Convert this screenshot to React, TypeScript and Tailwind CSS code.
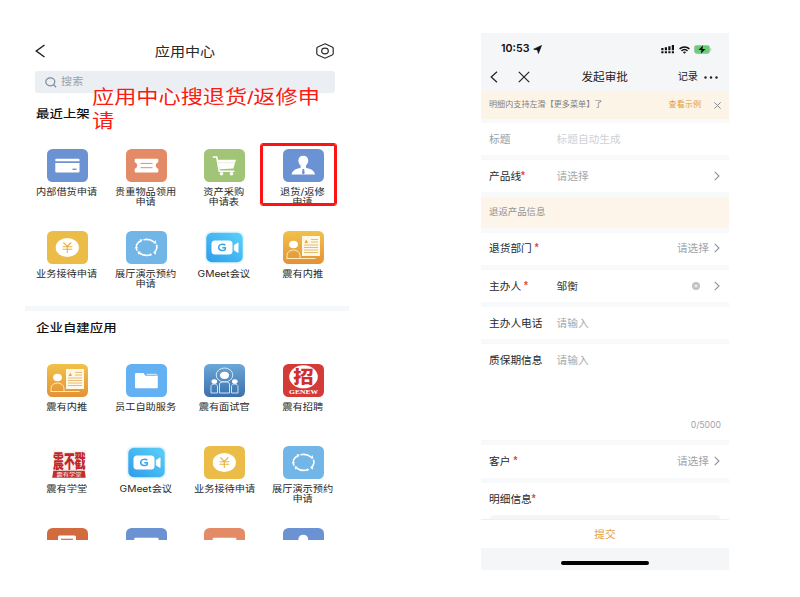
import type { ReactNode } from "react";

const sans = "font-['Liberation_Sans','Noto_Sans_CJK_SC',sans-serif]";

function Tile({ from, to, children }: { from: string; to?: string; children: ReactNode }) {
  const id = "g" + from.slice(1) + (to ?? "").slice(1);
  return (
    <svg width="41" height="33" viewBox="0 0 41 33" className="block">
      <defs>
        <linearGradient id={id} x1="0" y1="0" x2="0" y2="1">
          <stop offset="0" stopColor={from} />
          <stop offset="1" stopColor={to ?? from} />
        </linearGradient>
      </defs>
      <rect width="41" height="33" rx="5.5" fill={`url(#${id})`} />
      {children}
    </svg>
  );
}

const Card = () => (
  <Tile from="#6b93d3">
    <path d="M9 9.8h22.5a1 1 0 0 1 1 1v1.4H8.3v-1.4a1 1 0 0 1 .7-1zM8.3 14h24.2v8.6a1 1 0 0 1-1 1H9.3a1 1 0 0 1-1-1z" fill="#fff" />
    <path d="M25.5 20.3h4" stroke="#6b93d3" strokeWidth="1.4" />
  </Tile>
);

const Ticket = () => (
  <Tile from="#e38b66">
    <path d="M9.7 9.8h21.6a1 1 0 0 1 1 1v2.4c-1.6.6-2.5 1.8-2.5 3.3s.9 2.7 2.5 3.3v2.6a1 1 0 0 1-1 1H9.7a1 1 0 0 1-1-1v-2.6c1.6-.6 2.5-1.8 2.5-3.3s-.9-2.7-2.5-3.3v-2.4a1 1 0 0 1 1-1z" fill="#fff" />
    <path d="M14.5 14.4h12M14.5 18.7h12" stroke="#e38b66" strokeWidth="1" />
  </Tile>
);

const Cart = () => (
  <Tile from="#a1c477">
    <path d="M9.3 8h3.4l2.6 14.3h14.5" fill="none" stroke="#fff" strokeWidth="1.6" strokeLinecap="round" />
    <path d="M13.8 10.8H32l-2.6 8.6-13.8.9z" fill="#fff" />
    <path d="M14.5 13.7h16.5" stroke="#d4e5c0" strokeWidth=".6" />
    <circle cx="17.5" cy="24.7" r="1.8" fill="#fff" />
    <circle cx="27.5" cy="24.7" r="1.8" fill="#fff" />
  </Tile>
);

const Person = () => (
  <Tile from="#6b93d3">
    <path d="M20.3 6.8c3 0 4.900 1.800 4.900 4.700 0 2.200-.8 3.800-2.200 5v2.200c3.200 1.200 8.200 1.500 9 6.800H8.600c.8-5.300 5.800-5.600 9-6.800v-2.200c-1.400-1.200-2.200-2.800-2.200-5 0-2.900 1.900-4.700 4.900-4.700z" fill="#fff" />
    <path d="M19.600 20h1.500l.6 4.200-1.300 1.300-1.400-1.300z" fill="#6b93d3" />
  </Tile>
);

const Yen = () => (
  <Tile from="#ebbd48">
    <ellipse cx="20.300" cy="16.500" rx="11.600" ry="9.500" fill="#fff" />
    <path d="M16.500 11.500l3.800 4 3.900-4M15.500 15.700h9.800M15.500 18.300h9.800M20.300 15.500v6.500" fill="none" stroke="#e6b33c" strokeWidth="1.100" />
  </Tile>
);

const Cycle = () => (
  <Tile from="#72b6e8">
    <g fill="none" stroke="#fff" strokeWidth="1.600">
      <path d="M10.300 15.200c.5-2.500 2.200-4.400 4.800-5.500M17.500 8.700c4.200-.8 7.800.1 10.300 2.200M30.500 13.800c1 3 .2 5.600-2.200 7.600M24.800 23.700c-4.200 1.300-8.500.5-11.500-1.900M11.200 19.700c-.6-1-.9-1.900-.9-2.900" />
    </g>
    <path d="M13.500 8.300l3.200.1-1.400 2.700zM27.200 12.300l2.300-3.300.8 3.700zM30.300 21l-.8 2.700-2.500-2.400zM14.700 20.700l-2.500 3-.6-3.500zM8.700 17.300l1.700-2.800 1.500 2.600zM23.800 22.200l2.300 1.100-1.400 2z" fill="#fff" />
  </Tile>
);

const Meet = () => (
  <svg width="41" height="33" viewBox="0 0 41 33" className="block">
    <defs>
      <linearGradient id="meet" x1="0" y1="1" x2="1" y2="0">
        <stop offset="0" stopColor="#2f9dec" />
        <stop offset="1" stopColor="#5bd0f8" />
      </linearGradient>
    </defs>
    <rect x=".8" y=".3" width="39.400" height="32.500" rx="6" fill="#e3f5fd" />
    <rect x="2.300" y="1.800" width="36.400" height="29.400" rx="5.500" fill="url(#meet)" />
    <rect x="7.500" y="9.500" width="21" height="14" rx="3.500" fill="#fff" />
    <path d="M30.300 14.200l3.800-2.300v9.600l-3.800-2.300z" fill="#fff" stroke="#fff" strokeWidth=".8" strokeLinejoin="round" />
    <path d="M21.300 14.300c-1.600-1.700-6.600-1.500-6.600 2.200s5.600 3.700 6.600 1.800v-1.500h-3" fill="none" stroke="#36a5ee" strokeWidth="1.500" />
  </svg>
);

const Referral = () => (
  <Tile from="#f1c24a" to="#e39235">
    <rect x="19" y="5" width="18" height="20" fill="#fff8e8" />
    <path d="M28 8.500h7M28 11h7M21 14h14M21 16.500h14M21 19h14M21 21.500h14" stroke="#e3b566" strokeWidth=".9" />
    <path d="M21.500 12l1.800-3.500 1.700 3.500z" fill="#e7a936" />
    <ellipse cx="10.500" cy="13.500" rx="4.400" ry="3.800" fill="#fff" />
    <path d="M4 27.500v-3c0-7.300 13-7.300 13 0v3M3.500 27.500h29" fill="none" stroke="#fff1cf" strokeWidth=".9" />
  </Tile>
);

const Folder = () => (
  <Tile from="#63b1f3">
    <path d="M10 9h7.500l2 2.700h11.300a1 1 0 0 1 1 1v10.600a1 1 0 0 1-1 1H10a1 1 0 0 1-1-1V10a1 1 0 0 1 1-1z" fill="#fff" />
    <path d="M20.500 10.300h9.500l1.500 1" stroke="#fff" strokeWidth=".8" fill="none" />
  </Tile>
);

const Interview = () => (
  <Tile from="#6ba8d8" to="#3b70ae">
    <g fill="none" stroke="#dfeefa" strokeWidth=".9">
      <ellipse cx="20.500" cy="11" rx="8.300" ry="7" />
      <path d="M15.500 29V20c0-3 10-3 10 0v9zM7 29v-6.500c0-3.300 6.500-3.300 6.500 0V29zM27.500 29v-6.500c0-3.300 6.500-3.300 6.500 0V29z" />
    </g>
    <ellipse cx="20.500" cy="11.300" rx="4.500" ry="3.600" fill="#fff" />
    <ellipse cx="10.300" cy="17.500" rx="2.800" ry="2.300" fill="#fff" />
    <ellipse cx="30.800" cy="17.500" rx="2.800" ry="2.300" fill="#fff" />
  </Tile>
);

const Recruit = () => (
  <Tile from="#d43a36">
    <ellipse cx="20.500" cy="12.800" rx="14.300" ry="11.500" fill="#fff" />
    <text transform="translate(20.500 19) scale(1.200 1)" textAnchor="middle" fontSize="17" fontWeight="900" fill="#cf302d" className="font-['Noto_Sans_CJK_SC',sans-serif]">招</text>
    <text x="20.500" y="30.300" textAnchor="middle" fontSize="6.500" fontWeight="700" textLength="29" lengthAdjust="spacingAndGlyphs" fill="#fff" className="font-['Liberation_Serif',serif]">GENEW</text>
  </Tile>
);

const School = () => (
  <svg width="41" height="33" viewBox="0 0 41 33" className="block overflow-visible">
    <path d="M6 4l14 2 19-2-1.500 8 1.500 20H5L7.500 16z" fill="#fbeceb" />
    <path d="M6.300 24.800h31.400l1 7H5.200z" fill="#bf2f2e" />
    <text transform="translate(22.300 21.500) scale(.800 1.350)" textAnchor="middle" fontSize="13.500" fontWeight="900" fill="#c02626" className="font-['Noto_Sans_CJK_SC',sans-serif]">震不戳</text>
    <text transform="translate(22 30.300) scale(1.250 1)" textAnchor="middle" fontSize="5" fill="#fff" className="font-['Noto_Sans_CJK_SC',sans-serif]">震有学堂</text>
  </svg>
);

const Doc = () => (
  <Tile from="#d26c40">
    <rect x="11" y="7.500" width="18" height="20" rx="1.500" fill="#fff" />
    <path d="M14 11.300h12" stroke="#d26c40" strokeWidth="1.200" />
  </Tile>
);

type App = { icon: () => ReactNode; lines: string[]; marked?: boolean };

const recent: App[] = [
  { icon: Card, lines: ["内部借货申请"] },
  { icon: Ticket, lines: ["贵重物品领用", "申请"] },
  { icon: Cart, lines: ["资产采购", "申请表"] },
  { icon: Person, lines: ["退货/返修", "申请"], marked: true },
  { icon: Yen, lines: ["业务接待申请"] },
  { icon: Cycle, lines: ["展厅演示预约", "申请"] },
  { icon: Meet, lines: ["GMeet会议"] },
  { icon: Referral, lines: ["震有内推"] },
];

const custom: App[] = [
  { icon: Referral, lines: ["震有内推"] },
  { icon: Folder, lines: ["员工自助服务"] },
  { icon: Interview, lines: ["震有面试官"] },
  { icon: Recruit, lines: ["震有招聘"] },
  { icon: School, lines: ["震有学堂"] },
  { icon: Meet, lines: ["GMeet会议"] },
  { icon: Yen, lines: ["业务接待申请"] },
  { icon: Cycle, lines: ["展厅演示预约", "申请"] },
  { icon: Doc, lines: [] },
  { icon: Card, lines: [] },
  { icon: Ticket, lines: [] },
  { icon: Person, lines: [] },
];

function AppGrid({ apps }: { apps: App[] }) {
  return (
    <div className="ml-[3.200px] grid w-[314.400px] auto-rows-[82px] grid-cols-4">
      {apps.map((a, i) => (
        <div key={i} className="relative flex flex-col items-center">
          <a.icon />
          <div className="mt-[5.400px] mr-[1px] flex scale-x-[1.150] flex-col items-center font-[Inter,'Noto_Sans_CJK_SC',sans-serif] text-[8.900px] leading-[10px] whitespace-nowrap text-[#262626]">
            {a.lines.map((l) => (
              <span key={l}>{l}</span>
            ))}
          </div>
          {a.marked && <div className="absolute -top-[5px] -left-[3px] h-[61px] w-[75px] rounded-[2px] border-[2.500px] border-[#fb1414] outline-[.5px] outline-[#fb1414]" />}
        </div>
      ))}
    </div>
  );
}

function AppCenter() {
  return (
    <section className="relative mt-[33px] ml-[25px] flex h-[507px] w-[324px] shrink-0 flex-col overflow-hidden bg-white">
      <header className="flex h-[36px] shrink-0 items-center justify-between pr-[15px] pl-[10px]">
        <svg width="11" height="14" viewBox="0 0 11 14" fill="none" stroke="#222" strokeWidth="1.500">
          <path d="M9.500 1L1.300 7l8.200 6" />
        </svg>
        <h1 className="ml-[8px] scale-x-[1.160] text-[13px] leading-none text-[#2a2a2a]">应用中心</h1>
        <svg width="18" height="16" viewBox="0 0 18 16" fill="none" stroke="#2a2a2a" strokeWidth="1.200">
          <path d="M9 .8l7.200 3.200q1 .5 1 1.400v5.200q0 .9-1 1.400L9 15.200 1.800 12q-1-.5-1-1.400V5.400q0-.9 1-1.400z" />
          <ellipse cx="9" cy="8" rx="3.300" ry="2.800" />
        </svg>
      </header>
      <div className="mt-[2px] ml-[10px] flex h-[22px] w-[300px] shrink-0 items-center gap-[4px] rounded-[3px] bg-[#ebeff3] pl-[10px] text-[#9aa1a8]">
        <svg width="12" height="11" viewBox="0 0 12 11" fill="none" stroke="#7c8c99" strokeWidth="1.200">
          <ellipse cx="5.300" cy="4.800" rx="4.500" ry="4" />
          <path d="M8.500 7.800l2.700 2.400" />
        </svg>
        <span className="origin-left scale-x-[1.150] text-[9.700px] leading-none">搜索</span>
      </div>
      <h2 className="mt-[13px] ml-[10.500px] h-[16px] w-fit origin-left scale-x-[1.170] text-[11.500px] leading-[16px] font-medium text-[#111]">最近上架</h2>
      <div className="mt-[27px] h-[157px] shrink-0">
        <AppGrid apps={recent} />
      </div>
      <div className="h-[5px] shrink-0 bg-[#f4f7fb]" />
      <h2 className="mt-[9px] ml-[10.500px] h-[16px] w-fit shrink-0 origin-left scale-x-[1.170] text-[11.500px] leading-[16px] font-medium text-[#111]">企业自建应用</h2>
      <div className="mt-[28px]">
        <AppGrid apps={custom} />
      </div>
      <p className="absolute top-[53px] left-[67px] origin-left scale-x-[1.167] text-[19px] leading-[24px] whitespace-nowrap text-[#fb1b12]">
        应用中心搜退货/返修申
        <br />请
      </p>
    </section>
  );
}

const Chevron = () => (
  <svg width="6" height="10" viewBox="0 0 6 10" fill="none" stroke="#8d9298" strokeWidth="1.100">
    <path d="M.7 .8L5 5 .7 9.200" />
  </svg>
);

type FieldProps = {
  label: string;
  required?: boolean;
  spaced?: boolean;
  value?: string;
  valueTone?: string;
  labelTone?: string;
  trailing?: ReactNode;
  height?: string;
};

function Field({ label, required, spaced, value, valueTone = "text-[#a5a9ae]", labelTone = "text-[#26282c]", trailing, height = "h-[32.300px]" }: FieldProps) {
  return (
    <div className={`flex shrink-0 bg-white pr-[9px] pl-[8px] text-[10.700px] ${height}`}>
      <div className="flex h-[32px] w-full items-center">
        <div className={`flex w-[67.500px] items-center whitespace-nowrap ${labelTone}`}>
          {label}
          {required && <span className={`text-[10px] leading-none font-bold text-[#e0483d] ${spaced ? "ml-[3px]" : ""}`}>*</span>}
        </div>
        <div className={valueTone}>{value}</div>
        <div className="ml-auto flex items-center text-[#9fa3a8]">{trailing}</div>
      </div>
    </div>
  );
}

const Pick = () => (
  <>
    <span className="mr-[5px]">请选择</span>
    <Chevron />
  </>
);

function ApprovalForm() {
  return (
    <section className="mt-[33px] ml-[132px] flex h-[537px] w-[248px] shrink-0 flex-col overflow-hidden bg-[#f8f9fb]">
      <div className="flex h-[58px] shrink-0 flex-col bg-[#f5f6f8]">
        <div className="flex h-[33px] items-center pr-[17px] pl-[20px]">
          <span className="font-[Inter,sans-serif] text-[10.700px] font-semibold text-[#111]">10:53</span>
          <svg className="ml-[3px]" width="9" height="9" viewBox="0 0 9 9">
            <path d="M8.500.5L5.400 8.400 4.500 4.900.7 4.200z" fill="#111" stroke="#111" strokeWidth=".7" strokeLinejoin="round" />
          </svg>
          <div className="ml-auto flex items-center gap-[4px]">
            <svg width="14" height="9" viewBox="0 0 14 9" fill="#111">
              <path d="M.3 3h2.200v2.300H.3zM3.800 2.300H6v3H3.800zM7.300 1.200h2.200v4.100H7.300zM10.800 0H13v5.300h-2.200zM.3 6.300h2.200v2H.3zM3.800 6.300H6v2H3.800zM7.300 6.300h2.200v2H7.300zM10.800 6.300H13v2h-2.200z" />
            </svg>
            <svg width="11" height="8" viewBox="0 0 11 8" fill="none" stroke="#111" strokeWidth="1.500">
              <path d="M.6 2.900c2.800-2.700 7-2.700 9.800 0M2.500 4.900c1.800-1.600 4.200-1.600 6 0" />
              <path d="M4 6.200L5.500 7.700 7 6.200c-.9-.8-2.100-.8-3 0z" fill="#111" stroke="none" />
            </svg>
            <svg width="18" height="9" viewBox="0 0 18 9">
              <rect x=".4" y=".4" width="15.200" height="8" rx="2.300" fill="#65cf72" stroke="#aab5ac" strokeWidth=".7" />
              <path d="M16.500 3v3c1-.3 1-2.700 0-3z" fill="#aaa" />
              <path d="M9 .3L4.500 5h3L6.800 8.700 11.500 4h-3z" fill="#111" />
            </svg>
          </div>
        </div>
        <div className="flex h-[22px] items-center pr-[11px] pl-[9px] text-[#222]">
          <svg width="8" height="12" viewBox="0 0 8 12" fill="none" stroke="#222" strokeWidth="1.200">
            <path d="M7 .7L1.200 6 7 11.300" />
          </svg>
          <svg className="ml-[20px]" width="12" height="12" viewBox="0 0 12 12" fill="none" stroke="#222" strokeWidth="1.200">
            <path d="M.8.8l10.400 10.400M11.200.8L.8 11.200" />
          </svg>
          <span className="ml-[51.500px] text-[11.600px] leading-none">发起审批</span>
          <span className="ml-auto text-[10.200px] leading-none">记录</span>
          <svg className="ml-[6px]" width="14" height="3" viewBox="0 0 14 3" fill="#222">
            <circle cx="1.500" cy="1.500" r="1.200" />
            <circle cx="7" cy="1.500" r="1.200" />
            <circle cx="12.500" cy="1.500" r="1.200" />
          </svg>
        </div>
      </div>
      <div className="flex h-[28px] shrink-0 items-center bg-[#fcf4e7] pr-[8px] pl-[8px] text-[8.100px]">
        <span className="text-[#7d8184]">明细内支持左滑【更多菜单】了</span>
        <span className="ml-auto text-[#e09b3c]">查看示例</span>
        <svg className="ml-[13px]" width="7" height="7" viewBox="0 0 7 7" stroke="#7c8084" strokeWidth=".9">
          <path d="M.3.300l6.400 6.400M6.700.3L.3 6.700" />
        </svg>
      </div>
      <div className="mt-[4px] flex shrink-0 flex-col gap-[5px]">
        <Field label="标题" value="标题自动生成" labelTone="text-[#9b9ea2]" valueTone="text-[#cfd1d4]" height="h-[32px]" />
        <Field label="产品线" required value="请选择" trailing={<Chevron />} height="h-[32px]" />
        <div className="flex h-[30.500px] items-center bg-[#fdf5e9] pl-[8px] text-[9.400px] text-[#8f9295]">退返产品信息</div>
        <Field label="退货部门" required spaced trailing={<Pick />} />
        <Field
          label="主办人"
          required
          spaced
          value="邹衡"
          valueTone="text-[#3a3c40]"
          height="h-[32px]"
          trailing={
            <>
              <svg className="mr-[14px]" width="8" height="8" viewBox="0 0 8 8">
                <circle cx="4" cy="4" r="4" fill="#bfc2c6" />
                <path d="M2.600 2.600l2.800 2.800M5.400 2.600L2.600 5.400" stroke="#fff" strokeWidth=".8" />
              </svg>
              <Chevron />
            </>
          }
        />
        <Field label="主办人电话" value="请输入" />
        <div className="relative">
          <Field label="质保期信息" value="请输入" height="h-[96.300px]" />
          <span className="absolute right-[8px] bottom-[8px] font-[Inter,sans-serif] text-[8.700px] leading-[13px] text-[#9fa3a8]">0/5000</span>
        </div>
        <Field label="客户" required spaced trailing={<Pick />} />
        <div className="h-[36px] overflow-hidden bg-white">
          <Field label="明细信息" required />
          <div className="mx-[8px] h-[10px] rounded-t-[5px] bg-[#f5f6f7]" />
        </div>
      </div>
      <div className="flex h-[29.500px] shrink-0 items-center justify-center border-t border-[#eff0f2] bg-white text-[10.700px] text-[#e5a047]">提交</div>
      <div className="flex flex-1 items-center justify-center bg-[#f5f6f8] pt-[7px]">
        <div className="h-[4px] w-[88px] rounded-full bg-black" />
      </div>
    </section>
  );
}

export default function App() {
  return (
    <main lang="zh-CN" className={`flex h-[597px] w-[800px] items-start overflow-hidden bg-white ${sans}`}>
      <AppCenter />
      <ApprovalForm />
    </main>
  );
}
